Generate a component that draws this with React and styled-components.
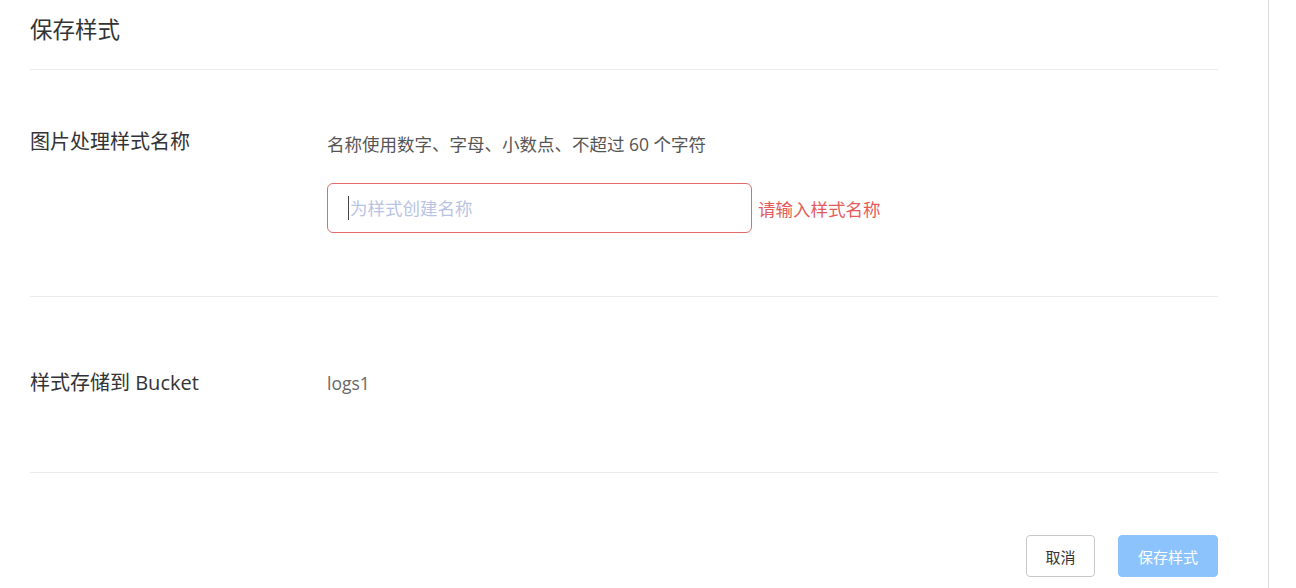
import React from 'react';
import styled, { createGlobalStyle } from 'styled-components';

const GlobalStyle = createGlobalStyle`
  html, body {
    margin: 0;
    padding: 0;
    background: #fff;
  }
  body {
    font-family: "Open Sans", "Noto Sans CJK SC", sans-serif;
    color: #333;
  }
`;

const Page = styled.div`
  width: 1269px;
  min-height: 100vh;
  box-sizing: border-box;
  padding: 0 50px 0 30px;
  border-right: 1px solid #dcdcdc;
`;

const Title = styled.div`
  font-size: 22.5px;
  line-height: 30px;
  color: #333;
  padding: 15px 0 24px;
  border-bottom: 1px solid #ebebeb;
`;

const Row = styled.div`
  display: flex;
  align-items: flex-start;
  padding: ${p => p.$pad};
  border-bottom: 1px solid #ebebeb;
`;

const Label = styled.div`
  width: 297px;
  flex-shrink: 0;
  font-size: 20px;
  line-height: 28px;
  color: #333;
`;

const Value = styled.div`
  display: flex;
  flex-direction: column;
  margin-top: ${p => p.$top || 0}px;
`;

const Hint = styled.div`
  font-size: 17.5px;
  line-height: 28px;
  color: #555;
`;

const Plain = styled.div`
  font-size: 17.5px;
  line-height: 28px;
  color: #666;
`;

const Field = styled.div`
  display: flex;
  align-items: center;
  gap: 6px;
  margin-top: 25px;
`;

const InputWrap = styled.div`
  position: relative;
`;

const Caret = styled.span`
  position: absolute;
  left: 21px;
  top: 13px;
  width: 1px;
  height: 24px;
  background: #444;
`;

const Input = styled.input`
  display: block;
  width: 425px;
  height: 50px;
  box-sizing: border-box;
  padding: 0 21px 0 22px;
  border: 1px solid ${p => (p.$error ? '#e26a6a' : '#ccc')};
  border-radius: 6px;
  font-family: inherit;
  font-size: 17.5px;
  color: #333;
  outline: none;
  &::placeholder {
    color: #b8c4e4;
  }
`;

const Error = styled.span`
  font-size: 17.5px;
  color: #e45b5b;
`;

const Footer = styled.div`
  display: flex;
  justify-content: flex-end;
  gap: 23px;
  padding-top: 62px;
`;

const Button = styled.button`
  height: 42px;
  padding: 0 ${p => (p.$primary ? 19 : 18.5)}px;
  box-sizing: border-box;
  border-radius: 4px;
  font-family: inherit;
  font-size: 15px;
  cursor: pointer;
  border: 1px solid ${p => (p.$primary ? '#8dc3fd' : '#c8c8c8')};
  background: ${p => (p.$primary ? '#8dc3fd' : '#fff')};
  color: ${p => (p.$primary ? '#fff' : '#333')};
`;

export default function App() {
  return (
    <>
      <GlobalStyle />
      <Page>
        <Title>保存样式</Title>
        <Row $pad="58px 0 63px">
          <Label>图片处理样式名称</Label>
          <Value $top={2}>
            <Hint>名称使用数字、字母、小数点、不超过 60 个字符</Hint>
            <Field>
              <InputWrap>
                <Input $error placeholder="为样式创建名称" />
                <Caret />
              </InputWrap>
              <Error>请输入样式名称</Error>
            </Field>
          </Value>
        </Row>
        <Row $pad="72px 0 75px">
          <Label>样式存储到 Bucket</Label>
          <Value>
            <Plain>logs1</Plain>
          </Value>
        </Row>
        <Footer>
          <Button>取消</Button>
          <Button $primary>保存样式</Button>
        </Footer>
      </Page>
    </>
  );
}
